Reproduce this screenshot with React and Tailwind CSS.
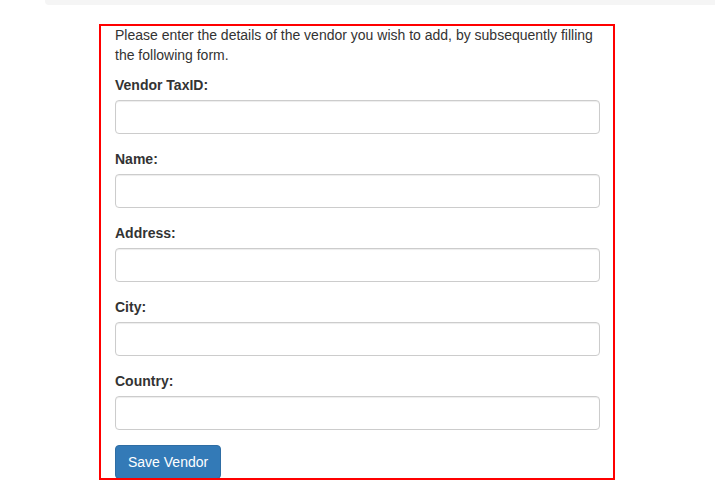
import React from 'react';

const fields = ['Vendor TaxID:', 'Name:', 'Address:', 'City:', 'Country:'];

export default function App() {
  return (
    <div
      className="min-h-screen bg-white text-[14px] leading-[20px] text-[#333]"
      style={{ fontFamily: "'Liberation Sans', Arial, sans-serif" }}
    >
      {/* bottom edge of the well above */}
      <div className="ml-[45px] h-[5px] rounded-bl-[4px] bg-[#f5f5f5]" />

      <div className="relative ml-[99px] mt-[19px] w-[516px] pt-[1px] pb-[1px]">
        <form className="ml-[16px] w-[485px]" onSubmit={e => e.preventDefault()}>
          <p className="mb-[10px]">
            Please enter the details of the vendor you wish to add, by subsequently filling the following form.
          </p>

          {fields.map(label => (
            <div key={label} className="mb-[15px]">
              <label className="mb-[5px] block font-bold">{label}</label>
              <input
                type="text"
                className="block h-[34px] w-full rounded-[4px] border border-[#ccc] bg-white px-3 py-[6px] shadow-[inset_0_1px_1px_rgba(0,0,0,0.075)] outline-none"
              />
            </div>
          ))}

          <button
            type="submit"
            className="h-[34px] rounded-[4px] border border-[#2e6da4] bg-[#337ab7] px-3 py-[6px] text-white"
          >
            Save Vendor
          </button>
        </form>

        {/* red annotation frame drawn over the form */}
        <div className="pointer-events-none absolute inset-0 border-2 border-[#f00]" />
      </div>
    </div>
  );
}
